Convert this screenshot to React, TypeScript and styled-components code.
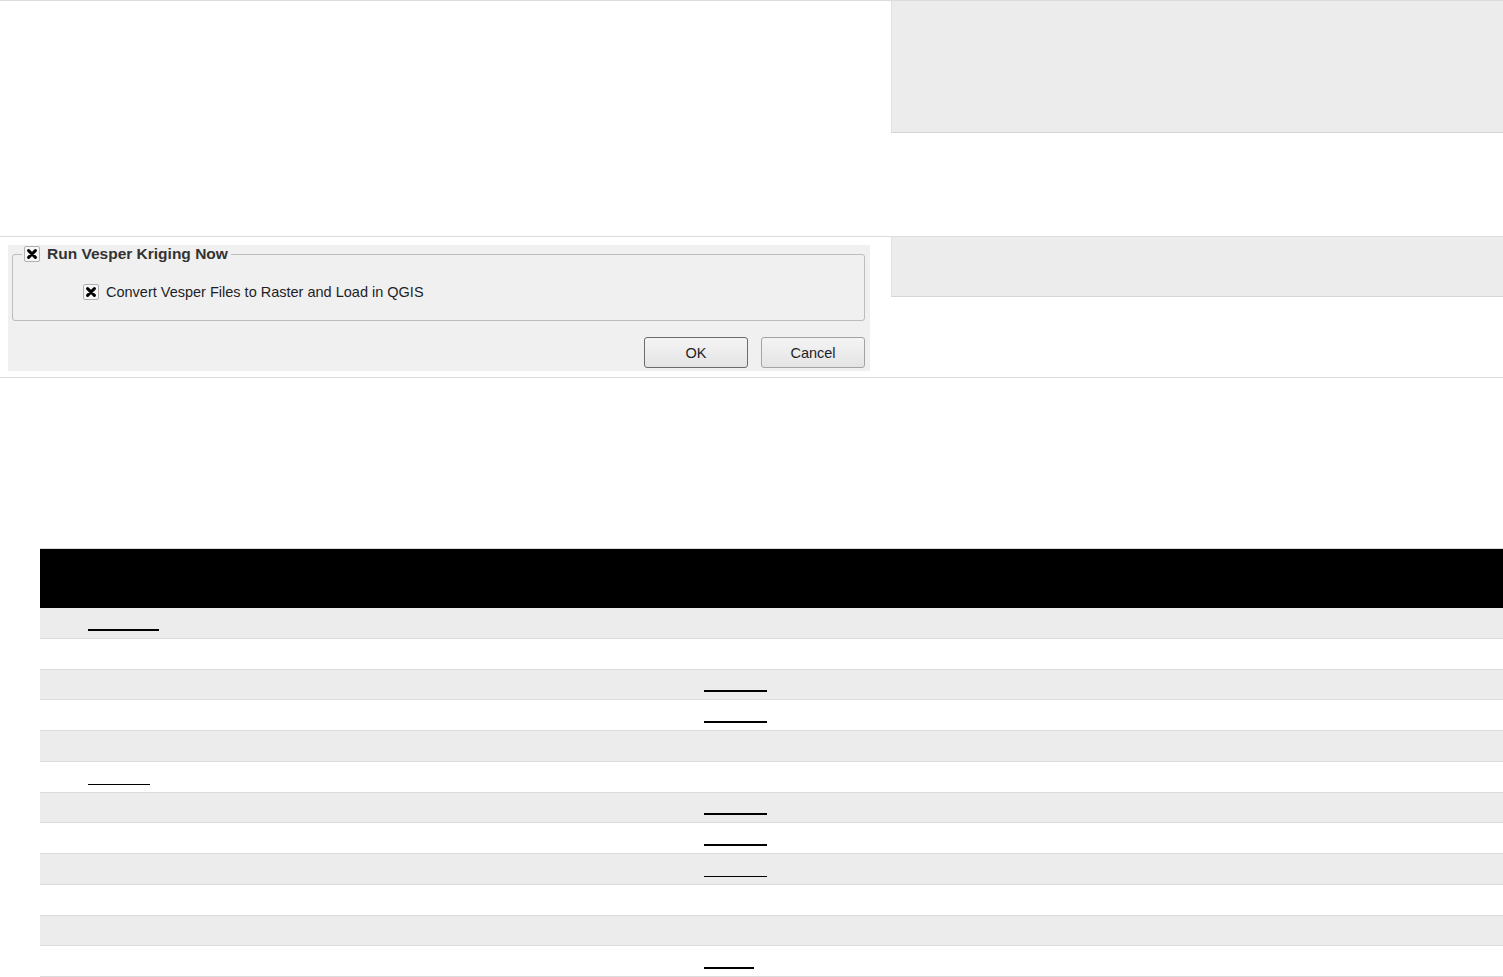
import { ReactElement } from "react";
import styled, { createGlobalStyle } from "styled-components";

const GlobalStyle = createGlobalStyle`
  body {
    margin: 0;
    background: #ffffff;
    font-family: "Liberation Sans", Arial, sans-serif;
  }
`;

const Page = styled.main`
  width: 1503px;
  overflow: hidden;
`;

const DocTable = styled.section`
  border-top: 1px solid #dcdcdc;
`;

const DocRow = styled.div<{ $height: number }>`
  display: grid;
  grid-template-columns: 891px 1fr;
  height: ${(p) => p.$height}px;
  border-bottom: 1px solid #dcdcdc;
`;

const DocCell = styled.div`
  padding: 8px 0 0 8px;
`;

const CodeBlock = styled.pre<{ $height: number }>`
  margin: 0;
  height: ${(p) => p.$height}px;
  background: #ececec;
  border-left: 1px solid #e2e2e2;
  border-bottom: 1px solid #d6d6d6;
`;

const Dialog = styled.div`
  width: 862px;
  height: 126px;
  box-sizing: border-box;
  background: #f0f0f0;
  padding: 1px 5px 0 4px;
  font-family: "Liberation Sans", Arial, sans-serif;
  font-size: 14.5px;
  color: #1e1e28;
`;

const GroupBox = styled.fieldset`
  margin: 0;
  height: 75px;
  box-sizing: border-box;
  border: 1px solid #bdbdbd;
  border-radius: 3px;
  padding: 0 0 0 9px;
`;

const Legend = styled.legend`
  margin: 0;
  padding: 0 3px 0 2px;
  display: flex;
  align-items: center;
  gap: 7px;
  font-weight: bold;
  font-size: 15.5px;
  color: #333;
  line-height: 16px;
`;

const CheckRow = styled.label`
  display: flex;
  align-items: center;
  gap: 7px;
  line-height: 16px;
  margin: 22px 0 0 61px;
`;

const ButtonBar = styled.div`
  display: flex;
  justify-content: flex-end;
  gap: 13px;
  margin-top: 16px;
`;

const Button = styled.button<{ $default?: boolean }>`
  width: 104px;
  height: 31px;
  border: 1px solid ${(p) => (p.$default ? "#6b6b6b" : "#a3a3a3")};
  border-radius: 3px;
  background: linear-gradient(#f4f4f4, #e4e4e4);
  font-family: "Liberation Sans", Arial, sans-serif;
  font-size: 14.5px;
  color: #1e1e28;
  padding: 0;
`;

const Box = styled.span`
  display: inline-flex;
  flex: none;
  width: 16px;
  height: 16px;
  box-sizing: border-box;
  border: 1px solid #b0b0b0;
  border-radius: 2px;
  background: #f6f6f6;
  align-items: center;
  justify-content: center;
`;

const Checkbox = (): ReactElement => (
  <Box>
    <svg width="10" height="10" viewBox="0 0 10 10">
      <path d="M1.6 1.6 L8.4 8.4 M8.4 1.6 L1.6 8.4" stroke="#000" strokeWidth="3" strokeLinecap="round" />
    </svg>
  </Box>
);

const DataTable = styled.section`
  margin: 170px 0 0 40px;
  border-top: 1px solid #dcdcdc;
`;

const HeadRow = styled.div`
  height: 59px;
  background: #000;
`;

const BodyRow = styled.div<{ $striped: boolean }>`
  display: grid;
  grid-template-columns: 616px 1fr;
  height: 29.75px;
  background: ${(p) => (p.$striped ? "#ececec" : "#ffffff")};
  border-bottom: 1px solid #dcdcdc;
`;

const Cell = styled.div`
  display: flex;
  align-items: flex-end;
  padding: 0 0 7px 48px;
`;

const Link = styled.span<{ $width: number; $thin?: boolean }>`
  display: inline-block;
  width: ${(p) => p.$width}px;
  border-bottom: ${(p) => (p.$thin ? 1 : 2)}px solid #000;
`;

type Row = { a?: number; aThin?: boolean; b?: number; bThin?: boolean };

const rows: Row[] = [
  { a: 71 },
  {},
  { b: 63 },
  { b: 63 },
  {},
  { a: 62, aThin: true },
  { b: 63 },
  { b: 63 },
  { b: 63, bThin: true },
  {},
  {},
  { b: 50 },
];

const App = (): ReactElement => {
  return (
    <>
      <GlobalStyle />
      <Page>
        <DocTable>
          <DocRow $height={235}>
            <DocCell />
            <CodeBlock $height={131} />
          </DocRow>
          <DocRow $height={140}>
            <DocCell>
              <Dialog>
                <GroupBox>
                  <Legend>
                    <Checkbox />
                    Run Vesper Kriging Now
                  </Legend>
                  <CheckRow>
                    <Checkbox />
                    Convert Vesper Files to Raster and Load in QGIS
                  </CheckRow>
                </GroupBox>
                <ButtonBar>
                  <Button $default>OK</Button>
                  <Button>Cancel</Button>
                </ButtonBar>
              </Dialog>
            </DocCell>
            <CodeBlock $height={59} />
          </DocRow>
        </DocTable>

        <DataTable>
          <HeadRow />
          {rows.map((row, index) => (
            <BodyRow key={index} $striped={index % 2 === 0}>
              <Cell>{row.a && <Link $width={row.a} $thin={row.aThin} />}</Cell>
              <Cell>{row.b && <Link $width={row.b} $thin={row.bThin} />}</Cell>
            </BodyRow>
          ))}
        </DataTable>
      </Page>
    </>
  );
};

export default App;
